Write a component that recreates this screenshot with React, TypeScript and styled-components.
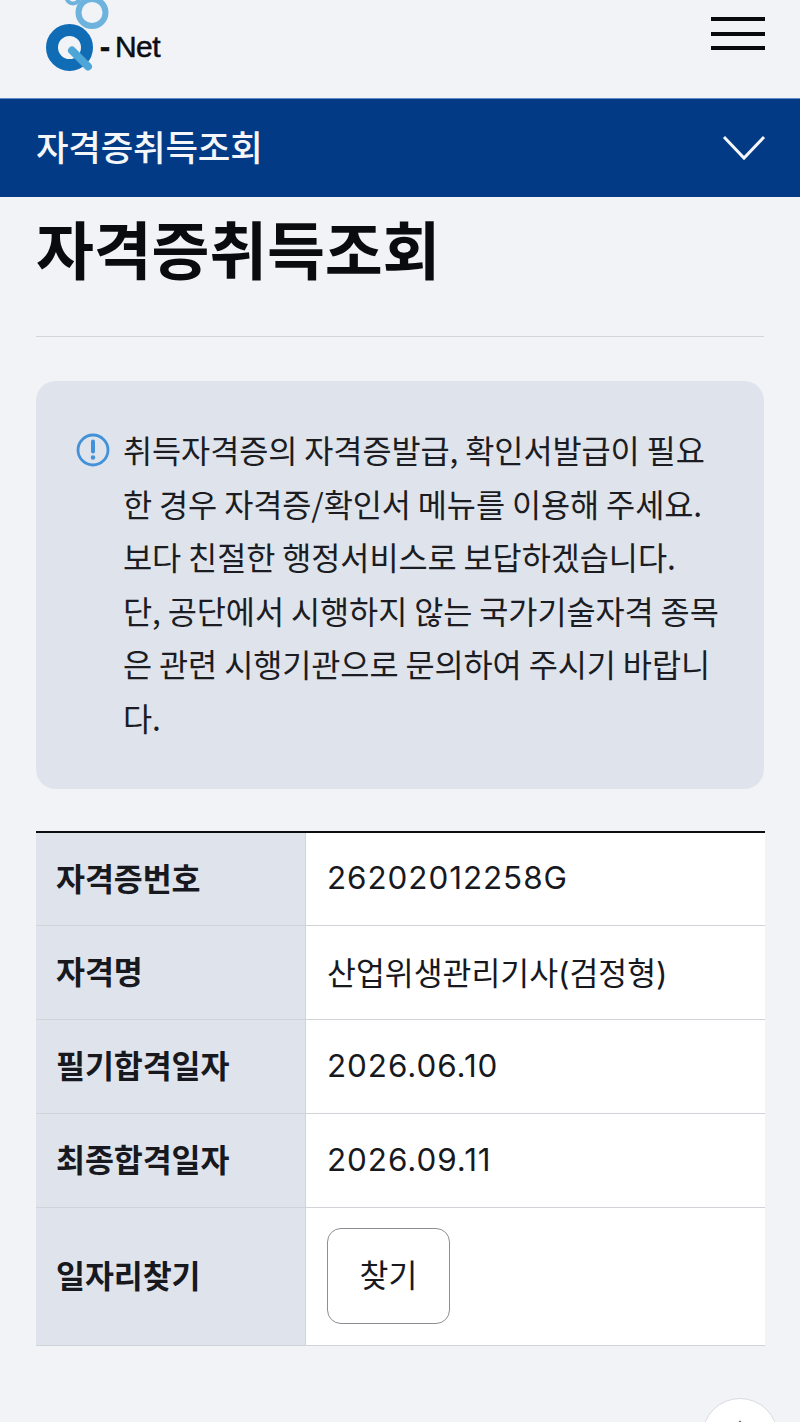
import * as React from "react";
import styled, { createGlobalStyle } from "styled-components";

const GlobalStyle = createGlobalStyle`
  html, body {
    margin: 0;
    padding: 0;
    height: 1422px;
    overflow: hidden;
    background-color: #f1f3f7;
  }
  body {
    font-family: "Noto Sans CJK KR", "Liberation Sans", sans-serif;
    color: #16181d;
  }
  * { box-sizing: border-box; }
`;

const Page = styled.div`
  position: relative;
  width: 800px;
  height: 1422px;
  overflow: hidden;
`;

const Header = styled.header`
  height: 98px;
  padding: 0 35px 0 45px;
  display: flex;
  justify-content: space-between;
  align-items: flex-start;
`;

const Logo = styled.div`
  display: flex;
  align-items: flex-start;
`;

const LogoDash = styled.span`
  font-family: "Liberation Sans", sans-serif;
  font-size: 30px;
  line-height: 30px;
  font-weight: 700;
  color: #0c0e12;
  margin: 32px 0 0 -9px;
  -webkit-text-stroke: 0.7px #0c0e12;
`;

const LogoWord = styled.span`
  font-family: "Liberation Sans", sans-serif;
  font-size: 30px;
  line-height: 30px;
  letter-spacing: -0.6px;
  color: #0c0e12;
  margin: 32px 0 0 5px;
  -webkit-text-stroke: 0.5px #0c0e12;
`;

const Burger = styled.div`
  width: 54px;
  margin-top: 17px;
  display: flex;
  flex-direction: column;
  gap: 10.5px;
`;

const BurgerLine = styled.div`
  height: 4px;
  background-color: #08090c;
`;

const Bar = styled.div`
  height: 99px;
  padding: 0 34px 0 36px;
  background-color: #033a85;
  border-top: 1px solid #5f8cc4;
  display: flex;
  justify-content: space-between;
  align-items: center;
  color: #f4f6fa;
`;

const BarTitle = styled.div`
  font-size: 35.4px;
  font-weight: 500;
  letter-spacing: -0.2px;
  padding-bottom: 5px;
`;

const Main = styled.main`
  padding: 0 36px;
`;

const Title = styled.h1`
  margin: 0;
  height: 140px;
  padding-top: 8px;
  font-size: 63px;
  line-height: 84px;
  font-weight: 700;
  letter-spacing: -0.2px;
  color: #0a0b0e;
  border-bottom: 1px solid #d3d5d9;
`;

const Notice = styled.section`
  margin-top: 44px;
  height: 408px;
  padding: 43px 0 0 40px;
  border-radius: 20px;
  background-color: #dfe3ec;
  display: flex;
  gap: 13px;
`;

const NoticeIcon = styled.svg`
  flex: none;
  width: 34px;
  height: 34px;
  margin-top: 9px;
`;

const NoticeText = styled.p`
  margin: -1px 0 0;
  font-size: 31.7px;
  line-height: 53.5px;
  letter-spacing: -0.1px;
  color: #1b1d22;
  white-space: pre;
`;

const Table = styled.div`
  margin: 42px -1px 0 0;
  border-top: 2px solid #0c0d10;
  border-bottom: 1px solid #d0d3d8;
`;

const Row = styled.div<{ tall?: boolean }>`
  display: grid;
  grid-template-columns: 269px 1fr;
  height: ${props => (props.tall ? "137px" : "94px")};
  border-bottom: ${props => (props.tall ? "none" : "1px solid #d0d3d8")};

  &:first-child {
    height: 93px;
  }
`;

const Head = styled.div`
  display: flex;
  align-items: center;
  padding: 0 0 5px 20px;
  background-color: #dfe3ec;
  font-size: 31.5px;
  font-weight: 700;
  letter-spacing: -0.1px;
  color: #17191e;
`;

const Cell = styled.div<{ numeric?: boolean }>`
  display: flex;
  align-items: center;
  padding: 0 0 2px 21px;
  background-color: #ffffff;
  border-left: 1px solid #d0d3d8;
  font-family: Inter, "Noto Sans CJK KR", sans-serif;
  font-size: 31.4px;
  letter-spacing: ${props => (props.numeric ? "0.95px" : "0")};
  color: #17191e;
`;

const FindButton = styled.button`
  width: 123px;
  height: 96px;
  border: 1px solid #8b8e93;
  border-radius: 14px;
  background-color: #ffffff;
  font-family: "Noto Sans CJK KR", sans-serif;
  font-size: 31.4px;
  color: #17191e;
  padding: 0 0 5px;
`;

const TopButton = styled.div`
  position: absolute;
  left: 702px;
  top: 1398px;
  width: 76px;
  height: 76px;
  border-radius: 50%;
  background-color: #ffffff;
  border: 1px solid #d8dade;
  display: flex;
  justify-content: center;
  padding-top: 21px;
`;

const rows = [
  { label: "자격증번호", value: "26202012258G", numeric: true },
  { label: "자격명", value: "산업위생관리기사(검정형)", numeric: false },
  { label: "필기합격일자", value: "2026.06.10", numeric: true },
  { label: "최종합격일자", value: "2026.09.11", numeric: true },
];

const notice = `취득자격증의 자격증발급, 확인서발급이 필요
한 경우 자격증/확인서 메뉴를 이용해 주세요.
보다 친절한 행정서비스로 보답하겠습니다.
단, 공단에서 시행하지 않는 국가기술자격 종목
은 관련 시행기관으로 문의하여 주시기 바랍니
다.`;

export default function App() {
  return (
    <Page>
      <GlobalStyle />
      <Header>
        <Logo>
          <svg width="64" height="76" viewBox="45 0 64 76">
            <circle cx="73" cy="-3" r="6.5" fill="none" stroke="#6db3de" strokeWidth="4" />
            <circle cx="92" cy="12.5" r="13.5" fill="none" stroke="#6db3de" strokeWidth="6" />
            <circle cx="69.5" cy="47.5" r="17.5" fill="none" stroke="#0f6cb5" strokeWidth="12" />
            <path d="M72 50.5 L88 66.5" stroke="#4ea5d8" strokeWidth="8" strokeLinecap="round" />
          </svg>
          <LogoDash>-</LogoDash>
          <LogoWord>Net</LogoWord>
        </Logo>
        <Burger>
          <BurgerLine />
          <BurgerLine />
          <BurgerLine />
        </Burger>
      </Header>
      <Bar>
        <BarTitle>자격증취득조회</BarTitle>
        <svg width="44" height="28" viewBox="0 0 44 28">
          <path d="M2 3 L22 24 L42 3" fill="none" stroke="#f4f6fa" strokeWidth="3" />
        </svg>
      </Bar>
      <Main>
        <Title>자격증취득조회</Title>
        <Notice>
          <NoticeIcon viewBox="0 0 34 34">
            <circle cx="17" cy="17" r="15" fill="none" stroke="#4391d8" strokeWidth="2.8" />
            <path d="M17 8.5 V18.5" stroke="#4391d8" strokeWidth="4" strokeLinecap="round" />
            <circle cx="17" cy="24.5" r="2.2" fill="#4391d8" />
          </NoticeIcon>
          <NoticeText>{notice}</NoticeText>
        </Notice>
        <Table>
          {rows.map(row => (
            <Row key={row.label}>
              <Head>{row.label}</Head>
              <Cell numeric={row.numeric}>{row.value}</Cell>
            </Row>
          ))}
          <Row tall>
            <Head>일자리찾기</Head>
            <Cell>
              <FindButton>찾기</FindButton>
            </Cell>
          </Row>
        </Table>
      </Main>
      <TopButton>
        <svg width="24" height="14" viewBox="0 0 24 14">
          <path d="M2 12 L12 2 L22 12" fill="none" stroke="#55585e" strokeWidth="2" />
        </svg>
      </TopButton>
    </Page>
  );
}
